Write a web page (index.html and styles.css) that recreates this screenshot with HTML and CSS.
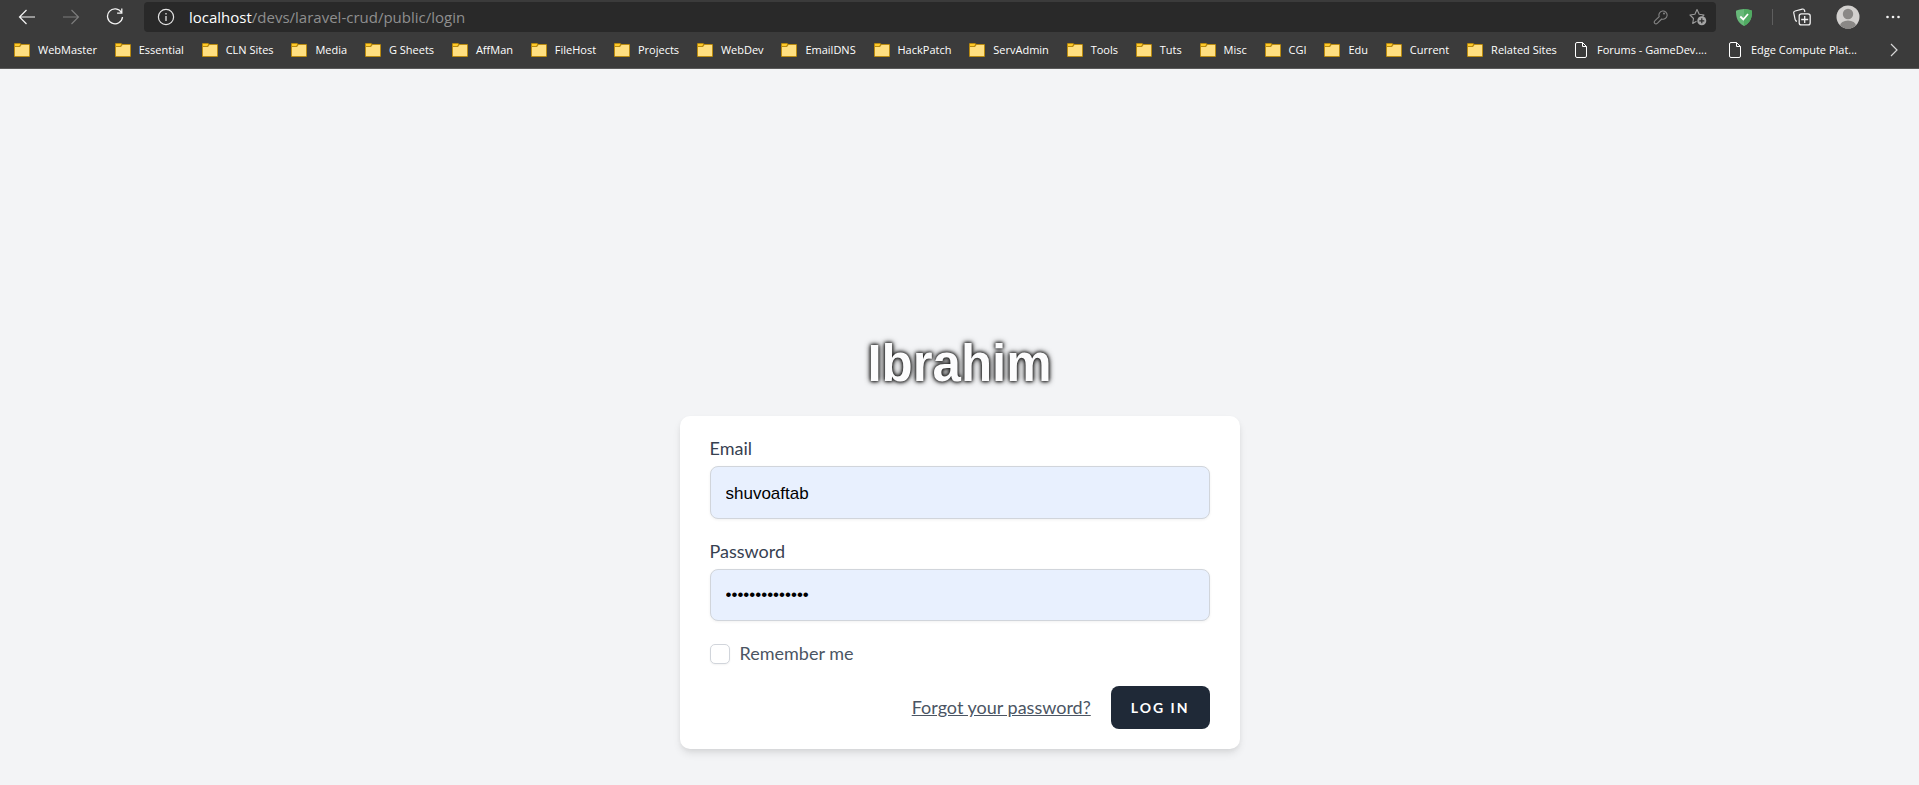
FILE: index.html
```html
<!DOCTYPE html>
<html lang="en">
<head>
<meta charset="utf-8">
<title>Log in</title>
<link rel="stylesheet" href="styles.css">
</head>
<body>
<svg class="defs" aria-hidden="true">
  <symbol id="folder" viewBox="0 0 16 14">
    <path d="M0 1a1 1 0 0 1 1-1h5l1.500 1H15a1 1 0 0 1 1 1V13a1 1 0 0 1-1 1H1a1 1 0 0 1-1-1z" fill="#b98a10"/>
    <path d="M1 1h5v1L5 3H1z" fill="#ffca28"/>
    <path d="M1 4h5l1.500-2H15V13H1z" fill="#ffdf80"/>
  </symbol>
  <symbol id="page" viewBox="0 0 12 16">
    <path d="M2 .5h5.500l4 4V14a1.500 1.500 0 0 1-1.500 1.500H2A1.500 1.500 0 0 1 .5 14V2A1.500 1.500 0 0 1 2 .5zM7.500.5v4h4" fill="none" stroke="#fff"/>
  </symbol>
</svg>
<header class="browser">
  <div class="toolbar">
    <div class="nav">
      <button class="icon-button" type="button" aria-label="Back"><svg width="18" height="16" viewBox="0 0 18 16"><path d="M17 8H1.500M8.500 1l-7 7 7 7" fill="none" stroke="#f4f4f4" stroke-width="1.200"/></svg></button>
      <button class="icon-button" type="button" aria-label="Forward" disabled><svg width="18" height="16" viewBox="0 0 18 16"><path d="M1 8h15.500M9.500 1l7 7-7 7" fill="none" stroke="#7c7c7c" stroke-width="1.200"/></svg></button>
      <button class="icon-button" type="button" aria-label="Refresh"><svg width="18" height="18" viewBox="0 0 18 18"><path d="M15.500 4.500A7.500 7.500 0 1 0 16.500 9M15.800.5v4.700h-4.700" fill="none" stroke="#f4f4f4" stroke-width="1.300"/></svg></button>
    </div>
    <div class="address">
      <svg width="18" height="18" viewBox="0 0 18 18"><circle cx="9" cy="9" r="7.600" fill="none" stroke="#e4e4e4" stroke-width="1.200"/><path d="M9 8v5M9 5v1.500" stroke="#e4e4e4" stroke-width="1.300"/></svg>
      <div class="url"><span class="host">localhost</span>/devs/laravel-crud/public/login</div>
      <div class="address-tools">
        <button class="icon-button" type="button" aria-label="Saved password"><svg width="16" height="16" viewBox="0 0 16 16"><path d="M6.200 7.600A4.100 4.100 0 1 1 8.700 10L4.500 14.200Q3 15.500 1.700 14.300 .6 13 2 11.700z" fill="none" stroke="#858585" stroke-width="1.100" stroke-linejoin="round"/><circle cx="11" cy="4.600" r="1" fill="#858585"/></svg></button>
        <button class="icon-button" type="button" aria-label="Add to favorites"><svg width="18" height="18" viewBox="0 0 18 18"><path d="M7.500 13.200L3.700 15.500l.8-5L1 7l4.900-.8L8 1.500l2.200 4.700L15 7l-1.500 1.500" fill="none" stroke="#9a9a9a" stroke-width="1.100" stroke-linejoin="round"/><circle cx="12.800" cy="12.800" r="4.500" fill="#a5a5a5"/><path d="M12.800 10.300v5M10.300 12.800h5" stroke="#292929" stroke-width="1.200"/></svg></button>
      </div>
    </div>
    <div class="tools">
      <button class="icon-button" type="button" aria-label="Ad blocker"><svg width="16" height="17" viewBox="0 0 16 17"><path d="M8 0c2.500 0 5.500.8 8 1.700 0 6-.5 11-8 15.300C.5 12.700 0 7.700 0 1.700 2.500.8 5.500 0 8 0z" fill="#67b879"/><path d="M8 0c2.500 0 5.500.8 8 1.700 0 6-.5 11-8 15.300z" fill="#50ab62"/><path d="M4.300 7.500l3 3L12 5" fill="none" stroke="#fff" stroke-width="1.800"/></svg></button>
      <span class="divider"></span>
      <button class="icon-button" type="button" aria-label="Collections"><svg width="18" height="18" viewBox="0 0 18 18"><path d="M4 13.300c-1.300-.3-1.700-1-1.900-2L.8 5.200C.5 4 1 3.300 2.200 3l7-1.900c1.200-.3 2 .1 2.300 1.300l.4 1.600" fill="none" stroke="#f0f0f0" stroke-width="1.200"/><rect x="6.200" y="5.900" width="11" height="11" rx="2.200" fill="none" stroke="#f0f0f0" stroke-width="1.300"/><path d="M11.700 8v7M8.200 11.500h7" stroke="#f0f0f0" stroke-width="1.300"/></svg></button>
      <button class="icon-button profile" type="button" aria-label="Profile"><svg width="24" height="24" viewBox="0 0 24 24"><defs><clipPath id="face"><circle cx="12" cy="12" r="11.500"/></clipPath></defs><circle cx="12" cy="12" r="11.500" fill="#d2d0ce"/><g clip-path="url(#face)" fill="#8a8886"><circle cx="12" cy="9" r="5.200"/><ellipse cx="12" cy="21" rx="8" ry="5.500"/></g></svg></button>
      <button class="icon-button" type="button" aria-label="Settings and more"><svg width="16" height="4" viewBox="0 0 16 4" fill="#f4f4f4"><circle cx="2.500" cy="2" r="1.300"/><circle cx="8" cy="2" r="1.300"/><circle cx="13.500" cy="2" r="1.300"/></svg></button>
    </div>
  </div>
  <nav class="bookmarks">
    <div class="folders">
      <a class="bookmark" href="#"><svg class="folder"><use href="#folder"/></svg>WebMaster</a>
      <a class="bookmark" href="#"><svg class="folder"><use href="#folder"/></svg>Essential</a>
      <a class="bookmark" href="#"><svg class="folder"><use href="#folder"/></svg>CLN Sites</a>
      <a class="bookmark" href="#"><svg class="folder"><use href="#folder"/></svg>Media</a>
      <a class="bookmark" href="#"><svg class="folder"><use href="#folder"/></svg>G Sheets</a>
      <a class="bookmark" href="#"><svg class="folder"><use href="#folder"/></svg>AffMan</a>
      <a class="bookmark" href="#"><svg class="folder"><use href="#folder"/></svg>FileHost</a>
      <a class="bookmark" href="#"><svg class="folder"><use href="#folder"/></svg>Projects</a>
      <a class="bookmark" href="#"><svg class="folder"><use href="#folder"/></svg>WebDev</a>
      <a class="bookmark" href="#"><svg class="folder"><use href="#folder"/></svg>EmailDNS</a>
      <a class="bookmark" href="#"><svg class="folder"><use href="#folder"/></svg>HackPatch</a>
      <a class="bookmark" href="#"><svg class="folder"><use href="#folder"/></svg>ServAdmin</a>
      <a class="bookmark" href="#"><svg class="folder"><use href="#folder"/></svg>Tools</a>
      <a class="bookmark" href="#"><svg class="folder"><use href="#folder"/></svg>Tuts</a>
      <a class="bookmark" href="#"><svg class="folder"><use href="#folder"/></svg>Misc</a>
      <a class="bookmark" href="#"><svg class="folder"><use href="#folder"/></svg>CGI</a>
      <a class="bookmark" href="#"><svg class="folder"><use href="#folder"/></svg>Edu</a>
      <a class="bookmark" href="#"><svg class="folder"><use href="#folder"/></svg>Current</a>
      <a class="bookmark" href="#"><svg class="folder"><use href="#folder"/></svg>Related Sites</a>
    </div>
    <div class="pages">
      <a class="bookmark page-link" href="#"><svg class="page"><use href="#page"/></svg>Forums - GameDev....</a>
      <a class="bookmark page-link" href="#"><svg class="page"><use href="#page"/></svg>Edge Compute Plat...</a>
    </div>
    <button class="icon-button more" type="button" aria-label="More favorites"><svg width="8" height="14" viewBox="0 0 8 14"><path d="M1 1l6 6-6 6" fill="none" stroke="#d8d8d8" stroke-width="1.200"/></svg></button>
  </nav>
</header>
<main class="login">
  <h1 class="logo">Ibrahim</h1>
  <form class="card">
    <label class="label" for="email">Email</label>
    <input class="field" id="email" type="text" value="shuvoaftab">
    <label class="label" for="password">Password</label>
    <input class="field" id="password" type="password" value="abcdefghijklmn">
    <label class="remember"><input class="checkbox" type="checkbox">Remember me</label>
    <div class="actions">
      <a class="forgot" href="#">Forgot your password?</a>
      <button class="submit" type="submit">LOG IN</button>
    </div>
  </form>
</main>
</body>
</html>
```
FILE: styles.css
```css
* { box-sizing: border-box; }
body {
  margin: 0;
  min-height: 100vh;
  display: flex;
  flex-direction: column;
  background: #f3f4f6;
  font-family: Lato, "Noto Sans", sans-serif;
}
.defs { display: none; }
.browser {
  background: #3b3b3b;
  border-bottom: 1px solid #5a5a5a;
}
.toolbar {
  display: flex;
  align-items: center;
  height: 34px;
  padding: 0 18px;
}
.icon-button {
  display: flex;
  padding: 0;
  border: 0;
  background: none;
}
.nav { display: flex; align-items: center; gap: 26px; width: 126px; }
.address {
  flex: 1;
  display: flex;
  align-items: center;
  gap: 14px;
  height: 30px;
  padding: 0 9px 0 13px;
  border-radius: 4px;
  background: #292929;
}
.address-tools { display: flex; align-items: center; gap: 20px; }
.url {
  flex: 1;
  color: #8f8f8f;
  font: 15px/20px "Open Sans", sans-serif;
}
.host { color: #fff; }
.tools { display: flex; align-items: center; gap: 20px; padding-left: 20px; }
.profile { margin: 0 5px; }
.divider { width: 1px; height: 16px; background: #5e5e5e; }
.bookmarks {
  display: flex;
  align-items: center;
  height: 34px;
  padding: 0 21px 2px 14px;
}
.folders {
  flex: 1;
  display: flex;
  justify-content: space-between;
}
.pages { display: flex; gap: 22px; padding: 0 33px 0 18px; }
.bookmark {
  display: flex;
  align-items: center;
  gap: 8px;
  color: #fff;
  font: 11px/16px "Open Sans", sans-serif;
  text-decoration: none;
  white-space: nowrap;
}
.page-link { gap: 10px; }
.folder { width: 16px; height: 14px; }
.page { width: 12px; height: 16px; }
.login {
  flex: 1;
  display: flex;
  flex-direction: column;
  align-items: center;
  justify-content: flex-end;
  padding-bottom: 36px;
}
.logo {
  margin: 0 0 22px;
  color: #fcfcfd;
  font: bold 51px/60px "Liberation Sans", Arial, sans-serif;
  text-shadow: 0 0 3px #222, 0 0 4px #222, 0 0 6px #333;
}
.card {
  display: flex;
  flex-direction: column;
  width: 100%;
  max-width: 560px;
  padding: 20px 30px;
  border-radius: 10px;
  background: #fff;
  box-shadow: 0 5px 8px -1px rgba(0, 0, 0, .1), 0 2px 5px -1px rgba(0, 0, 0, .06);
}
.label { color: #374151; font-size: 18px; line-height: 25px; }
.field {
  width: 100%;
  height: 53px;
  margin: 5px 0 20px;
  padding: 2px 15px 0;
  border: 1px solid #d1d5db;
  border-radius: 8px;
  background: #e8f0fe;
  box-shadow: 0 1px 3px rgba(0, 0, 0, .06);
  color: #000;
  font: 17px/24px "Liberation Sans", Arial, sans-serif;
}
.field[type="password"] { height: 52px; padding-top: 0; }
.remember {
  display: flex;
  align-items: center;
  gap: 10px;
  align-self: flex-start;
  color: #4b5563;
  font-size: 18px;
  line-height: 25px;
}
.checkbox {
  appearance: none;
  width: 20px;
  height: 20px;
  margin: 0;
  border: 1px solid #d1d5db;
  border-radius: 5px;
  background: #fff;
  box-shadow: 0 1px 2px rgba(0, 0, 0, .05);
}
.actions {
  display: flex;
  align-items: center;
  justify-content: flex-end;
  gap: 20px;
  margin-top: 20px;
}
.forgot { color: #4b5563; font-size: 18px; line-height: 25px; }
.submit {
  height: 43px;
  padding: 0 20px;
  border: 0;
  border-radius: 8px;
  background: #1f2937;
  color: #fff;
  font: bold 14px/20px Lato, sans-serif;
  letter-spacing: 2px;
}
```
